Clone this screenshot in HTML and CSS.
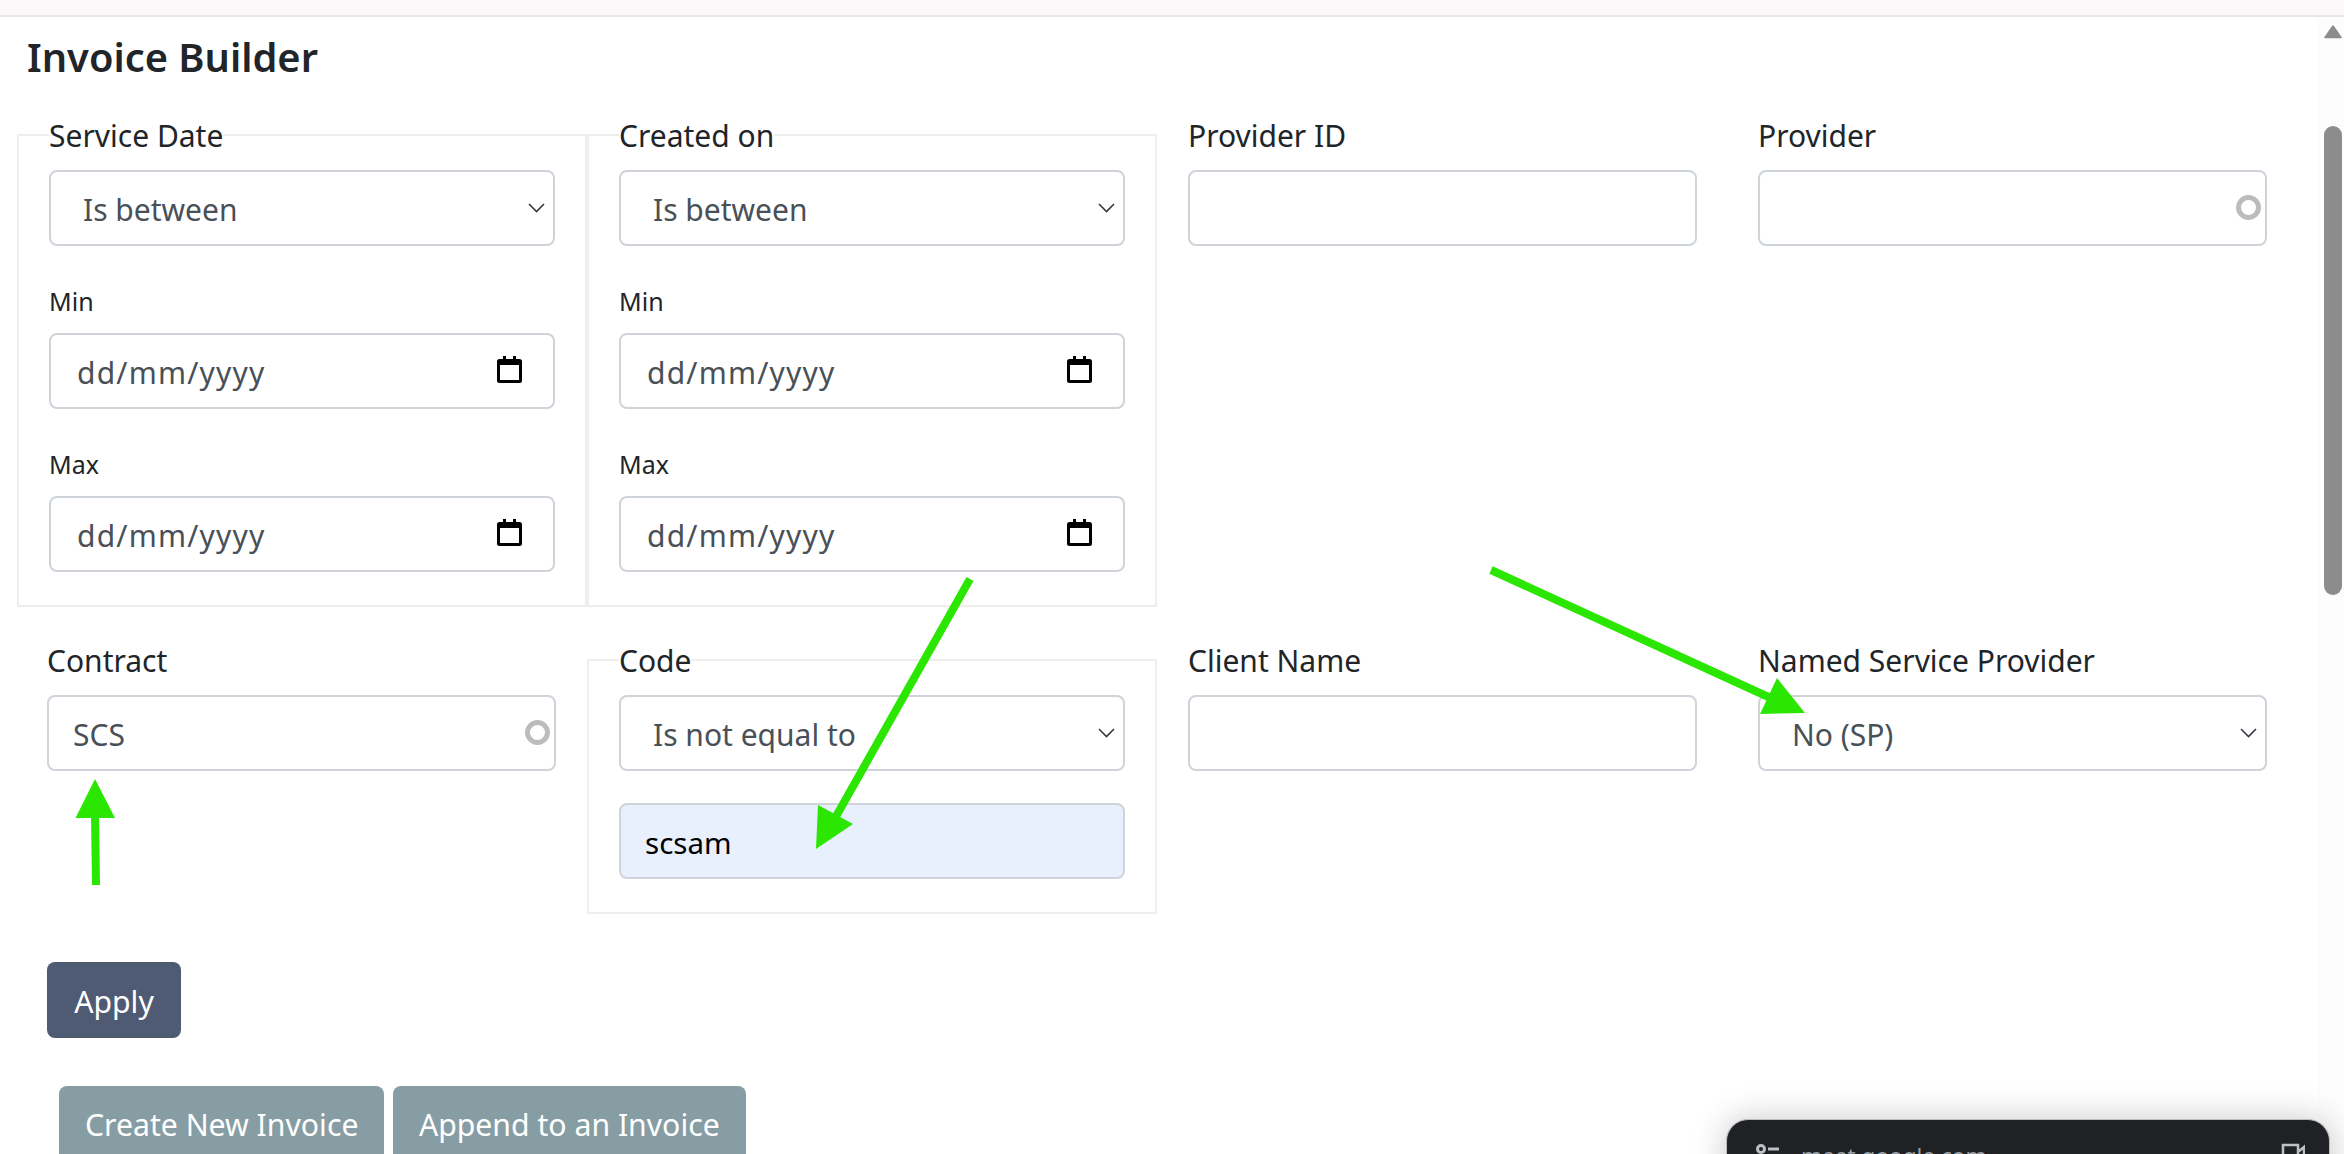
FILE: index.html
```html
<!DOCTYPE html>
<html lang="en">
<head>
<meta charset="utf-8">
<title>Invoice Builder</title>
<link rel="stylesheet" href="styles.css">
</head>
<body>
<div class="topbar"></div>
<main class="page">
  <h1 class="title">Invoice Builder</h1>
  <div class="filters">
    <fieldset class="group">
      <legend class="field-label">Service Date</legend>
      <select class="control select"><option>Is between</option></select>
      <div class="sub-label">Min</div>
      <div class="control date"><span>dd/mm/yyyy</span><svg class="cal" viewBox="0 0 25 27"><path d="M6 0h3v3h7V0h3v3h3.500a2.500 2.500 0 0 1 2.500 2.500v19a2.500 2.500 0 0 1-2.500 2.500H2.500A2.500 2.500 0 0 1 0 24.500v-19A2.500 2.500 0 0 1 2.500 3H6zM3 9v15h19V9z"/></svg></div>
      <div class="sub-label">Max</div>
      <div class="control date"><span>dd/mm/yyyy</span><svg class="cal" viewBox="0 0 25 27"><path d="M6 0h3v3h7V0h3v3h3.500a2.500 2.500 0 0 1 2.500 2.500v19a2.500 2.500 0 0 1-2.500 2.500H2.500A2.500 2.500 0 0 1 0 24.500v-19A2.500 2.500 0 0 1 2.500 3H6zM3 9v15h19V9z"/></svg></div>
    </fieldset>
    <fieldset class="group">
      <legend class="field-label">Created on</legend>
      <select class="control select"><option>Is between</option></select>
      <div class="sub-label">Min</div>
      <div class="control date"><span>dd/mm/yyyy</span><svg class="cal" viewBox="0 0 25 27"><path d="M6 0h3v3h7V0h3v3h3.500a2.500 2.500 0 0 1 2.500 2.500v19a2.500 2.500 0 0 1-2.500 2.500H2.500A2.500 2.500 0 0 1 0 24.500v-19A2.500 2.500 0 0 1 2.500 3H6zM3 9v15h19V9z"/></svg></div>
      <div class="sub-label">Max</div>
      <div class="control date"><span>dd/mm/yyyy</span><svg class="cal" viewBox="0 0 25 27"><path d="M6 0h3v3h7V0h3v3h3.500a2.500 2.500 0 0 1 2.500 2.500v19a2.500 2.500 0 0 1-2.500 2.500H2.500A2.500 2.500 0 0 1 0 24.500v-19A2.500 2.500 0 0 1 2.500 3H6zM3 9v15h19V9z"/></svg></div>
    </fieldset>
    <div class="cell">
      <label class="field-label">Provider ID</label>
      <input class="control text" type="text">
    </div>
    <div class="cell">
      <label class="field-label">Provider</label>
      <div class="with-spinner"><input class="control text" type="text"><span class="spinner"></span></div>
    </div>
    <div class="cell cell-first">
      <label class="field-label">Contract</label>
      <div class="with-spinner"><input class="control text" type="text" value="SCS"><span class="spinner"></span></div>
    </div>
    <fieldset class="group">
      <legend class="field-label">Code</legend>
      <select class="control select"><option>Is not equal to</option></select>
      <input class="control text autofilled" type="text" value="scsam">
    </fieldset>
    <div class="cell">
      <label class="field-label">Client Name</label>
      <input class="control text" type="text">
    </div>
    <div class="cell">
      <label class="field-label">Named Service Provider</label>
      <select class="control select"><option>No (SP)</option></select>
    </div>
  </div>
  <div class="apply-row"><button class="btn btn-apply" type="button">Apply</button></div>
  <div class="action-row">
    <button class="btn btn-action" type="button">Create New Invoice</button>
    <button class="btn btn-action" type="button">Append to an Invoice</button>
  </div>
</main>

<svg class="arrows" viewBox="0 0 2344 1154" aria-hidden="true">
  <path class="arrow-line" d="M96 885L95 815"/>
  <path class="arrow-head" d="M95 779L115 818L75.500 818Z"/>
  <path class="arrow-line" d="M970 579L834 820"/>
  <path class="arrow-head" d="M818 805L853 824L816 849Z"/>
  <path class="arrow-line" d="M1491 570L1775 700"/>
  <path class="arrow-head" d="M1777 678L1805 713L1760 714Z"/>
</svg>

<div class="scrollbar">
  <svg class="scroll-up" viewBox="0 0 18 14"><path d="M9 1L17 12.500H1Z"/></svg>
  <div class="scroll-thumb"></div>
</div>

<div class="share-popup">
  <svg class="share-tune" viewBox="0 0 24 10"><circle cx="5" cy="5" r="3.500"/><path d="M12 5h11"/></svg>
  <span class="share-url">meet.google.com</span>
  <svg class="share-cam" viewBox="0 0 24 24"><path d="M2 2h15v18H2zM17 9l6-5v14l-6-5z"/></svg>
</div>
</body>
</html>
```
FILE: styles.css
```css
* { box-sizing: border-box; }
html, body { margin: 0; height: 1154px; overflow: hidden; background: #fff; }
body { position: relative; font-family: "Noto Sans", "Open Sans", sans-serif; color: #212529; }

.topbar { height: 17px; background: #faf8f9; border-bottom: 2px solid #e8e6e8; }
.page { padding-left: 17px; }
.title { margin: 17px 0 31px 10px; font-size: 39.800px; line-height: 46px; font-weight: 600; color: #212529; }

.filters { display: grid; grid-template-columns: repeat(4, 570px); row-gap: 29.500px; align-items: start; }
.group { margin: 0; min-width: 0; padding: 0 30px 33px; border: 2px solid #eeeeee; }
.cell { padding: 0 30px 0 31px; }
.cell-first { padding: 0 31px 0 30px; }

.field-label { display: block; padding: 2px 0 0; margin: 0 0 12px; font-size: 30px; line-height: 45px; color: #212529; }
.sub-label { margin: 36px 0 13.500px; font-size: 25px; line-height: 38px; color: #212529; }

.control { display: block; width: 100%; height: 75.500px; margin: 0; border: 2px solid #ced4da; border-radius: 8px; background: #fff; font-family: inherit; font-size: 30px; color: #495057; outline: none; }
.text { padding: 3px 24px 0; }
.select { padding: 3px 40px 0 32px; appearance: none; background: #fff url("data:image/svg+xml,%3Csvg xmlns='http://www.w3.org/2000/svg' viewBox='0 0 17 10'%3E%3Cpath d='M1 1l7.500 7.500L16 1' fill='none' stroke='%23343a40' stroke-width='1.600'/%3E%3C/svg%3E") no-repeat right 8px center / 17px 10px; }
.date { display: flex; align-items: center; justify-content: space-between; padding: 3px 31px 0 26px; letter-spacing: 1.200px; }
.cal { width: 25px; height: 27px; margin-top: -5px; fill: #000; }
.autofilled { margin-top: 32.500px; background: #e8f0fe; color: #000; font-size: 29.500px; }

.with-spinner { position: relative; }
.spinner { position: absolute; right: 6px; top: 25px; width: 25px; height: 25px; border: 5px solid #bcbcbc; border-radius: 50%; filter: blur(.4px); }

.btn { height: 75.500px; border: 0; border-radius: 8px; padding: 3px 26px 0; font-family: inherit; font-size: 30.200px; color: #fff; }
.apply-row { margin: 48.500px 0 48px 30px; }
.btn-apply { width: 134px; padding: 3px 0 0; background: #4f5a73; }
.action-row { display: flex; gap: 8.500px; margin-left: 42px; }
.btn-action { background: #879da4; }

.arrows { position: absolute; left: 0; top: 0; width: 2344px; height: 1154px; pointer-events: none; }
.arrow-line { fill: none; stroke: #2ae600; stroke-width: 8; }
.arrow-head { fill: #2ae600; }

.scrollbar { position: absolute; right: 0; top: 17px; bottom: 0; width: 26px; background: #fdfdfd; }
.scroll-up { position: absolute; left: 6px; top: 8px; width: 18px; height: 14px; fill: #8c8c8c; stroke: #8c8c8c; stroke-width: 1.500; stroke-linejoin: round; }
.scroll-thumb { position: absolute; left: 6px; top: 109px; width: 18px; height: 469px; border-radius: 9px; background: #8c8c8c; }

.share-popup { position: absolute; left: 1726px; top: 1119px; width: 604px; height: 80px; display: flex; align-items: flex-start; padding: 20px 24px 0 29px; border: 1px solid #bdbdbd; border-bottom: 0; border-radius: 22px 22px 0 0; background: #202124; box-shadow: 0 0 34px rgba(0, 0, 0, .22); }
.share-tune { width: 24px; height: 10px; margin-top: 4px; fill: none; stroke: #bdc1c6; stroke-width: 3; }
.share-url { margin-left: 21px; font-size: 22.500px; line-height: 32px; color: #9aa0a6; }
.share-cam { width: 24px; height: 24px; margin-left: auto; margin-top: 3px; fill: none; stroke: #bdc1c6; stroke-width: 2.500; }
```
